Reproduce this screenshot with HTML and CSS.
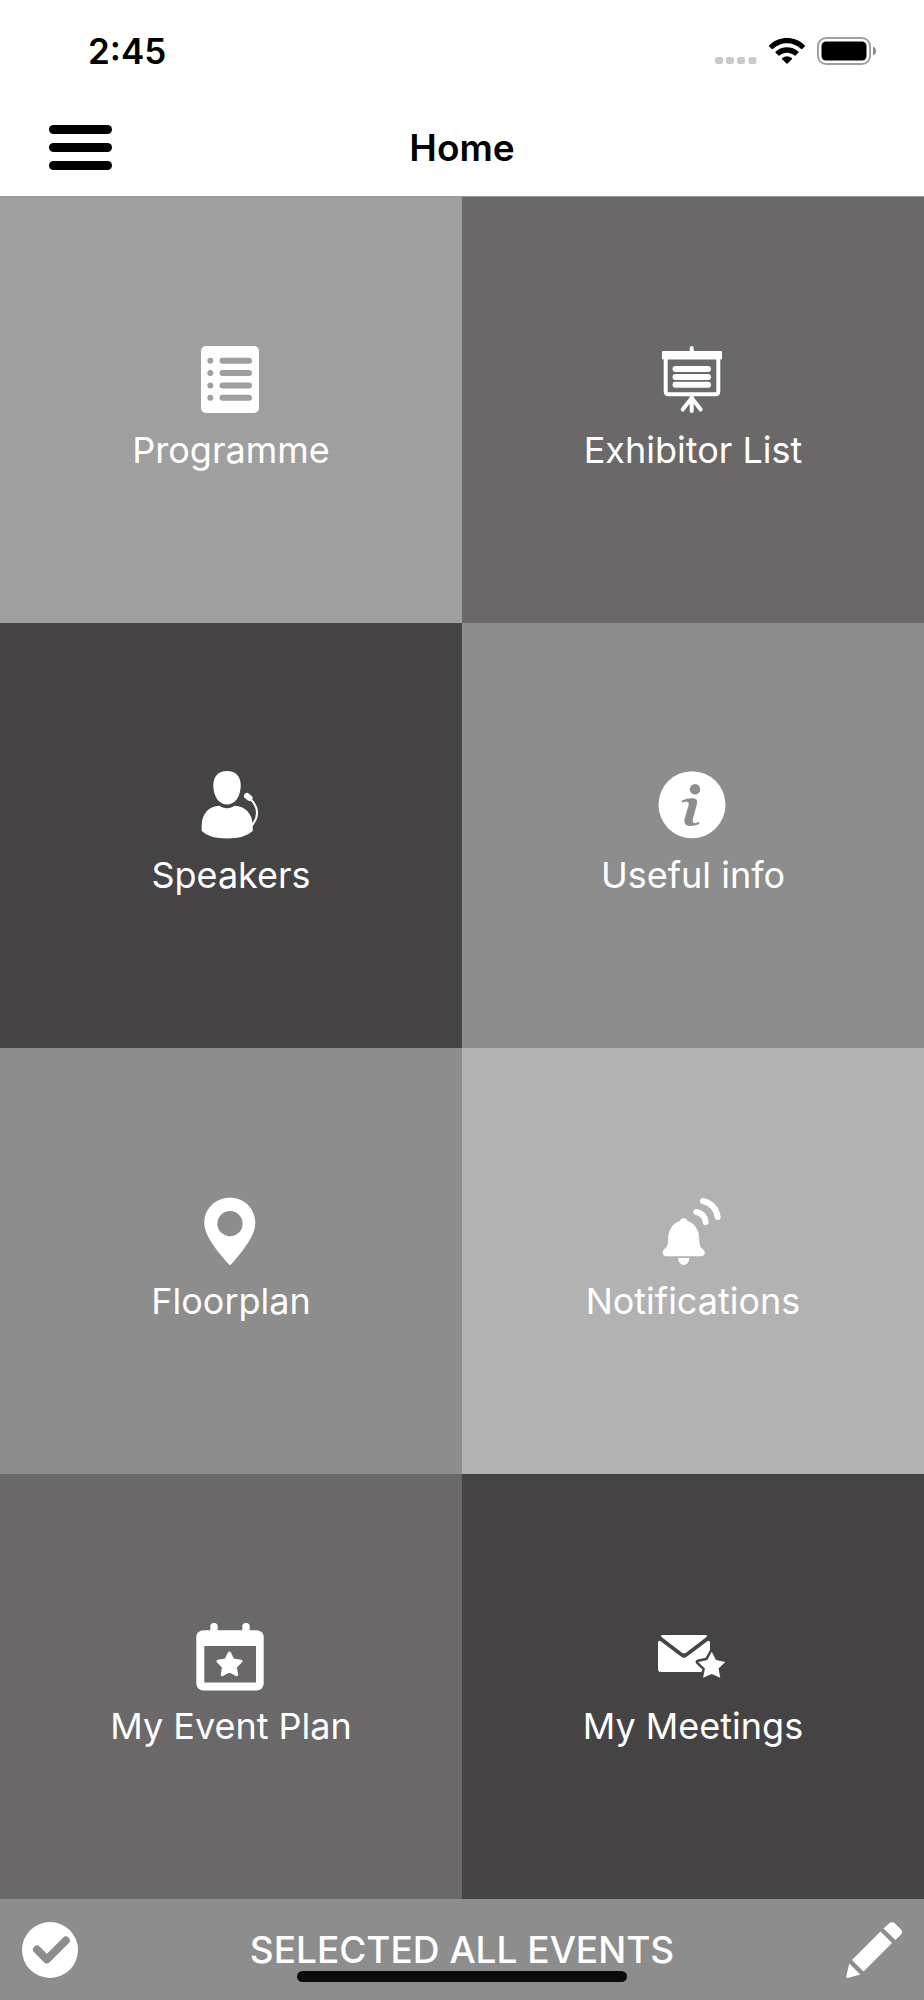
FILE: index.html
```
<!DOCTYPE html>
<html lang="en">
<head>
    <meta charset="UTF-8">
    <meta name="viewport" content="width=device-width, initial-scale=1">
    <title>Home</title>
    <link rel="stylesheet" href="styles.css">
</head>
<body>

    <header>
        <div class="status-bar">
            <span class="time">2:45</span>
            <div class="status-icons">
                <svg class="signal" width="42" height="28" viewBox="0 0 42 28" fill="#cacaca">
                    <rect x="0" y="20" width="8" height="7" rx="2.5"/>
                    <rect x="11" y="20" width="8" height="7" rx="2.5"/>
                    <rect x="22" y="20" width="8" height="7" rx="2.5"/>
                    <rect x="33.5" y="20" width="8" height="7" rx="2.5"/>
                </svg>
                <svg class="wifi" width="36" height="28" viewBox="0 0 36 28">
                    <path d="M0 9.2 Q-.2 8.7 .3 8.2 C10 -1.400 26 -1.400 35.700 8.200 Q36.200 8.700 36 9.200 L33.200 12 Q32.700 12.300 32.200 12 C24 4.200 12 4.200 3.800 12 Q3.300 12.300 2.800 12 Z"/>
                    <path d="M6.400 15.600 Q6.200 15.100 6.700 14.600 C13 8.700 23 8.700 29.300 14.600 Q29.800 15.100 29.600 15.600 L26.500 18.500 Q26 18.800 25.500 18.500 C21 14.700 15 14.700 10.500 18.500 Q10 18.800 9.500 18.500 Z"/>
                    <path d="M12.900 21.900 Q12.700 21.400 13.200 21 Q18 17.400 22.800 21 Q23.300 21.400 23.100 21.900 L18.500 26.500 Q18 27 17.500 26.500 Z"/>
                </svg>
                <svg class="battery" width="60" height="28" viewBox="0 0 60 28">
                    <rect x="1" y="1" width="52" height="26" rx="8" fill="none" stroke="#a0a0a0" stroke-width="2"/>
                    <rect x="4.500" y="4.500" width="45" height="19" rx="4.500"/>
                    <path d="M56 9.500 Q59 11 59 14 Q59 17 56 18.500 Z" fill="#8a8a8a"/>
                </svg>
            </div>
        </div>

        <div class="nav-bar">
            <button type="button" class="menu-button" aria-label="Menu">
                <span></span>
                <span></span>
                <span></span>
            </button>
            <h1>Home</h1>
        </div>
    </header>

    <main class="tiles">
        <a href="#programme" class="tile gray">
            <svg viewBox="0 0 68 68">
                <rect x="4" y="0" width="58" height="67" rx="5"/>
                <g class="cut-line">
                    <path d="M25.500 14.700 H52 M25.500 27 H52 M25.500 39.500 H52 M25.500 51.700 H52"/>
                    <path d="M13.300 14.700 h.01 M13.300 27 h.01 M13.300 39.500 h.01 M13.300 51.700 h.01"/>
                </g>
            </svg>
            <span>Programme</span>
        </a>

        <a href="#exhibitors" class="tile dim">
            <svg viewBox="0 0 68 68">
                <rect x="3" y="5" width="60" height="8.500" rx="1"/>
                <path class="line" d="M32.700 2 V8 M6.700 12 V45.500 Q6.700 48.300 9.500 48.300 H56.500 Q59.300 48.300 59.300 45.500 V12 M32.700 48 V65 M32.700 52 L23.700 63.500 M32.700 52 L41.700 63.500"/>
                <path class="line thick" d="M16.500 23 H49 M16.500 31 H49 M16.500 38.700 H49"/>
            </svg>
            <span>Exhibitor List</span>
        </a>

        <a href="#speakers" class="tile dark">
            <svg viewBox="0 0 68 68">
                <path d="M30 0 C39 0 43.700 5.500 43.700 14.500 C43.700 25.500 38 33.500 30 33.500 C22 33.500 16.300 25.500 16.300 14.500 C16.300 5.500 21 0 30 0 Z"/>
                <path d="M22.500 34.700 C26 38 34 38 37.500 34.700 C48 35.200 55.700 42.500 55.700 54.500 V60 Q48 67.500 30 67.500 Q12 67.500 4.700 60 V54.500 C4.700 42.500 12 35.200 22.500 34.700 Z"/>
                <path class="line thick" d="M50 25 L52.500 27"/>
                <path class="line thin" d="M54 28.500 C60.500 35.500 62.500 44.500 55.300 54"/>
            </svg>
            <span>Speakers</span>
        </a>

        <a href="#info" class="tile medium">
            <svg viewBox="0 0 68 68">
                <circle cx="33" cy="33.700" r="33.500"/>
                <g class="cut">
                    <circle cx="36" cy="18.300" r="5.200"/>
                    <path d="M23 29.500 Q28 27.200 33 27.300 C38 27.300 38.700 29.500 37.800 33.500 L34 47.500 C33 52 34.500 53.500 40.300 50.800 V53 Q35 55.300 31 55.100 C25.500 54.800 24.800 51 25.800 47 L29.500 34.500 C30.500 30.500 28.500 30 23 31.700 Z"/>
                </g>
            </svg>
            <span>Useful info</span>
        </a>

        <a href="#floorplan" class="tile medium">
            <svg viewBox="0 0 68 68">
                <path d="M33 .7 C47.500 .7 58.300 11.500 58.300 26 C58.300 40 43 57 34.300 67.300 Q33 68.700 31.700 67.300 C23 57 7.300 40 7.300 26 C7.300 11.500 18.500 .7 33 .7 Z"/>
                <circle class="cut" cx="33" cy="26.700" r="12.600"/>
            </svg>
            <span>Floorplan</span>
        </a>

        <a href="#notifications" class="tile light">
            <svg viewBox="0 0 68 68">
                <path d="M20.800 24 Q21.500 21.300 24.700 21.300 Q27.900 21.300 28.600 24 C36 26.500 39.800 33 40.200 41 C40.400 47 40.800 49.500 42.500 51 C45 52.500 45.700 54 45.700 55.500 Q45.700 59.300 42 59.300 H7.500 Q3.700 59.300 3.700 55.500 C3.700 54 4.400 52.500 6.900 50.500 C8.600 49 9 47 9.200 41 C9.600 33 13.400 26.500 20.800 24 Z"/>
                <path d="M19 61 H30.400 Q29.500 68 24.700 68 Q19.900 68 19 61 Z"/>
                <path class="line thick" d="M37.300 15 Q45.500 16.500 46.700 25"/>
                <path class="line thick" d="M44 4 Q56.500 7 58.700 20"/>
            </svg>
            <span>Notifications</span>
        </a>

        <a href="#event-plan" class="tile dim">
            <svg viewBox="0 0 68 68">
                <rect x="-.7" y="8.300" width="67.400" height="60.200" rx="7"/>
                <rect x="13.300" y="1" width="7.400" height="12" rx="3.500"/>
                <rect x="45.300" y="1" width="7.400" height="12" rx="3.500"/>
                <rect class="cut" x="7.300" y="24" width="51.700" height="36.500"/>
                <path class="soft" d="M32.400 31 L36 38 L43.900 39.200 L38.300 44.900 L39.600 52.700 L32.400 49 L25.200 52.700 L26.500 44.900 L20.900 39.200 L28.800 38 Z"/>
            </svg>
            <span>My Event Plan</span>
        </a>

        <a href="#meetings" class="tile dark">
            <svg viewBox="0 0 68 68">
                <path d="M2.500 13 H47.500 Q48.500 14 47.500 15 L27 30.700 Q25 32 23 30.700 L2.500 15 Q1.500 14 2.500 13 Z"/>
                <path d="M1 18.700 L22 34.500 Q25 37 28 34.500 L49 18.700 Q51 18.700 51 20.500 V50 H2 Q-1 50 -1 47 V20.500 Q-1 18.700 1 18.700 Z"/>
                <path class="star" d="M52.700 29.800 L57 38 L66.300 40 L59.500 46.500 L61.300 55.700 L52.700 52 L44.100 55.700 L45.900 46.500 L39.100 40 L48.400 38 Z"/>
            </svg>
            <span>My Meetings</span>
        </a>
    </main>

    <footer>
        <button type="button" class="footer-button" aria-label="Select events">
            <svg viewBox="0 0 56 56">
                <circle cx="28" cy="28" r="28"/>
                <path class="check" d="M15 27.500 L24.800 37.500 L43.800 18.500"/>
            </svg>
        </button>
        <p>SELECTED ALL EVENTS</p>
        <button type="button" class="footer-button" aria-label="Edit">
            <svg viewBox="0 0 56 56">
                <path d="M37.500 6.500 L43 1.500 Q46 -1.200 49 1.500 L54.500 7 Q57.500 10 55 12.500 L49.500 18 Z"/>
                <path d="M34.500 9.500 L46 21 L17.500 49.500 L6 38 Z"/>
                <path d="M3.300 41.500 L14.300 52.500 L1.500 55.900 Q-.2 56 .2 54.500 Z"/>
            </svg>
        </button>
        <div class="home-indicator"></div>
    </footer>

</body>
</html>
```
FILE: styles.css
```
* {
    box-sizing: border-box;
}

body {
    font-family: Inter, "Liberation Sans", sans-serif;
    background-color: #fff;
    color: #000;
    margin: 0;
    min-height: 100vh;
    display: flex;
    flex-direction: column;
}

button {
    background: none;
    border: none;
    padding: 0;
    cursor: pointer;
}

header {
    border-bottom: 1px solid #999b99;
}

.status-bar {
    display: flex;
    align-items: center;
    justify-content: space-between;
    height: 101px;
    padding: 0 47px 0 88px;
}

.time {
    font-size: 35px;
    font-weight: 600;
}

.status-icons {
    display: flex;
    gap: 12px;
}

.nav-bar {
    display: grid;
    grid-template-columns: 1fr auto 1fr;
    align-items: center;
    height: 95px;
    padding: 0 49px 3px;
}

.menu-button {
    display: flex;
    flex-direction: column;
    gap: 9px;
    width: 63px;
}

.menu-button span {
    height: 9px;
    border-radius: 5px;
    background-color: #000;
}

h1 {
    margin: 0;
    font-size: 37px;
    font-weight: 600;
}

.tiles {
    flex: 1;
    display: grid;
    grid-template-columns: 1fr 1fr;
    grid-auto-rows: 1fr;
}

.tile {
    display: flex;
    flex-direction: column;
    align-items: center;
    justify-content: center;
    gap: 12px;
    padding: 20px;
    background-color: var(--tile);
    color: #fff;
    font-size: 36px;
    line-height: 48px;
    text-decoration: none;
}

.tile svg {
    width: 68px;
    height: 68px;
    fill: #fff;
    overflow: visible;
}

.gray {
    --tile: #9f9f9f;
}

.dim {
    --tile: #6a6868;
}

.dark {
    --tile: #454343;
}

.medium {
    --tile: #8d8d8d;
}

.light {
    --tile: #b2b2b2;
}

/* icon parts */
.line {
    fill: none;
    stroke: #fff;
    stroke-width: 4;
    stroke-linecap: round;
}

.thick {
    stroke-width: 6;
}

.thin {
    stroke-width: 2;
}

.tile .cut {
    fill: var(--tile);
}

.cut-line {
    stroke: var(--tile);
    stroke-width: 6;
    stroke-linecap: round;
}

.soft {
    stroke: #fff;
    stroke-width: 3;
    stroke-linejoin: round;
}

.star {
    stroke: var(--tile);
    stroke-width: 5;
    stroke-linejoin: round;
    paint-order: stroke;
}

footer {
    position: relative;
    display: flex;
    align-items: center;
    justify-content: space-between;
    height: 101px;
    padding: 0 22px;
    background-color: #8d8d8d;
    color: #fff;
}

footer p {
    margin: 0;
    font-size: 37px;
    font-weight: 500;
}

.footer-button svg {
    display: block;
    width: 56px;
    height: 56px;
    fill: #fff;
    overflow: visible;
}

.footer-button .check {
    fill: none;
    stroke: #8d8d8d;
    stroke-width: 8;
    stroke-linecap: round;
    stroke-linejoin: round;
}

.home-indicator {
    position: absolute;
    bottom: 18px;
    left: 50%;
    width: 330px;
    height: 11px;
    border-radius: 6px;
    background-color: #0b0b0b;
    transform: translateX(-50%);
}
```
